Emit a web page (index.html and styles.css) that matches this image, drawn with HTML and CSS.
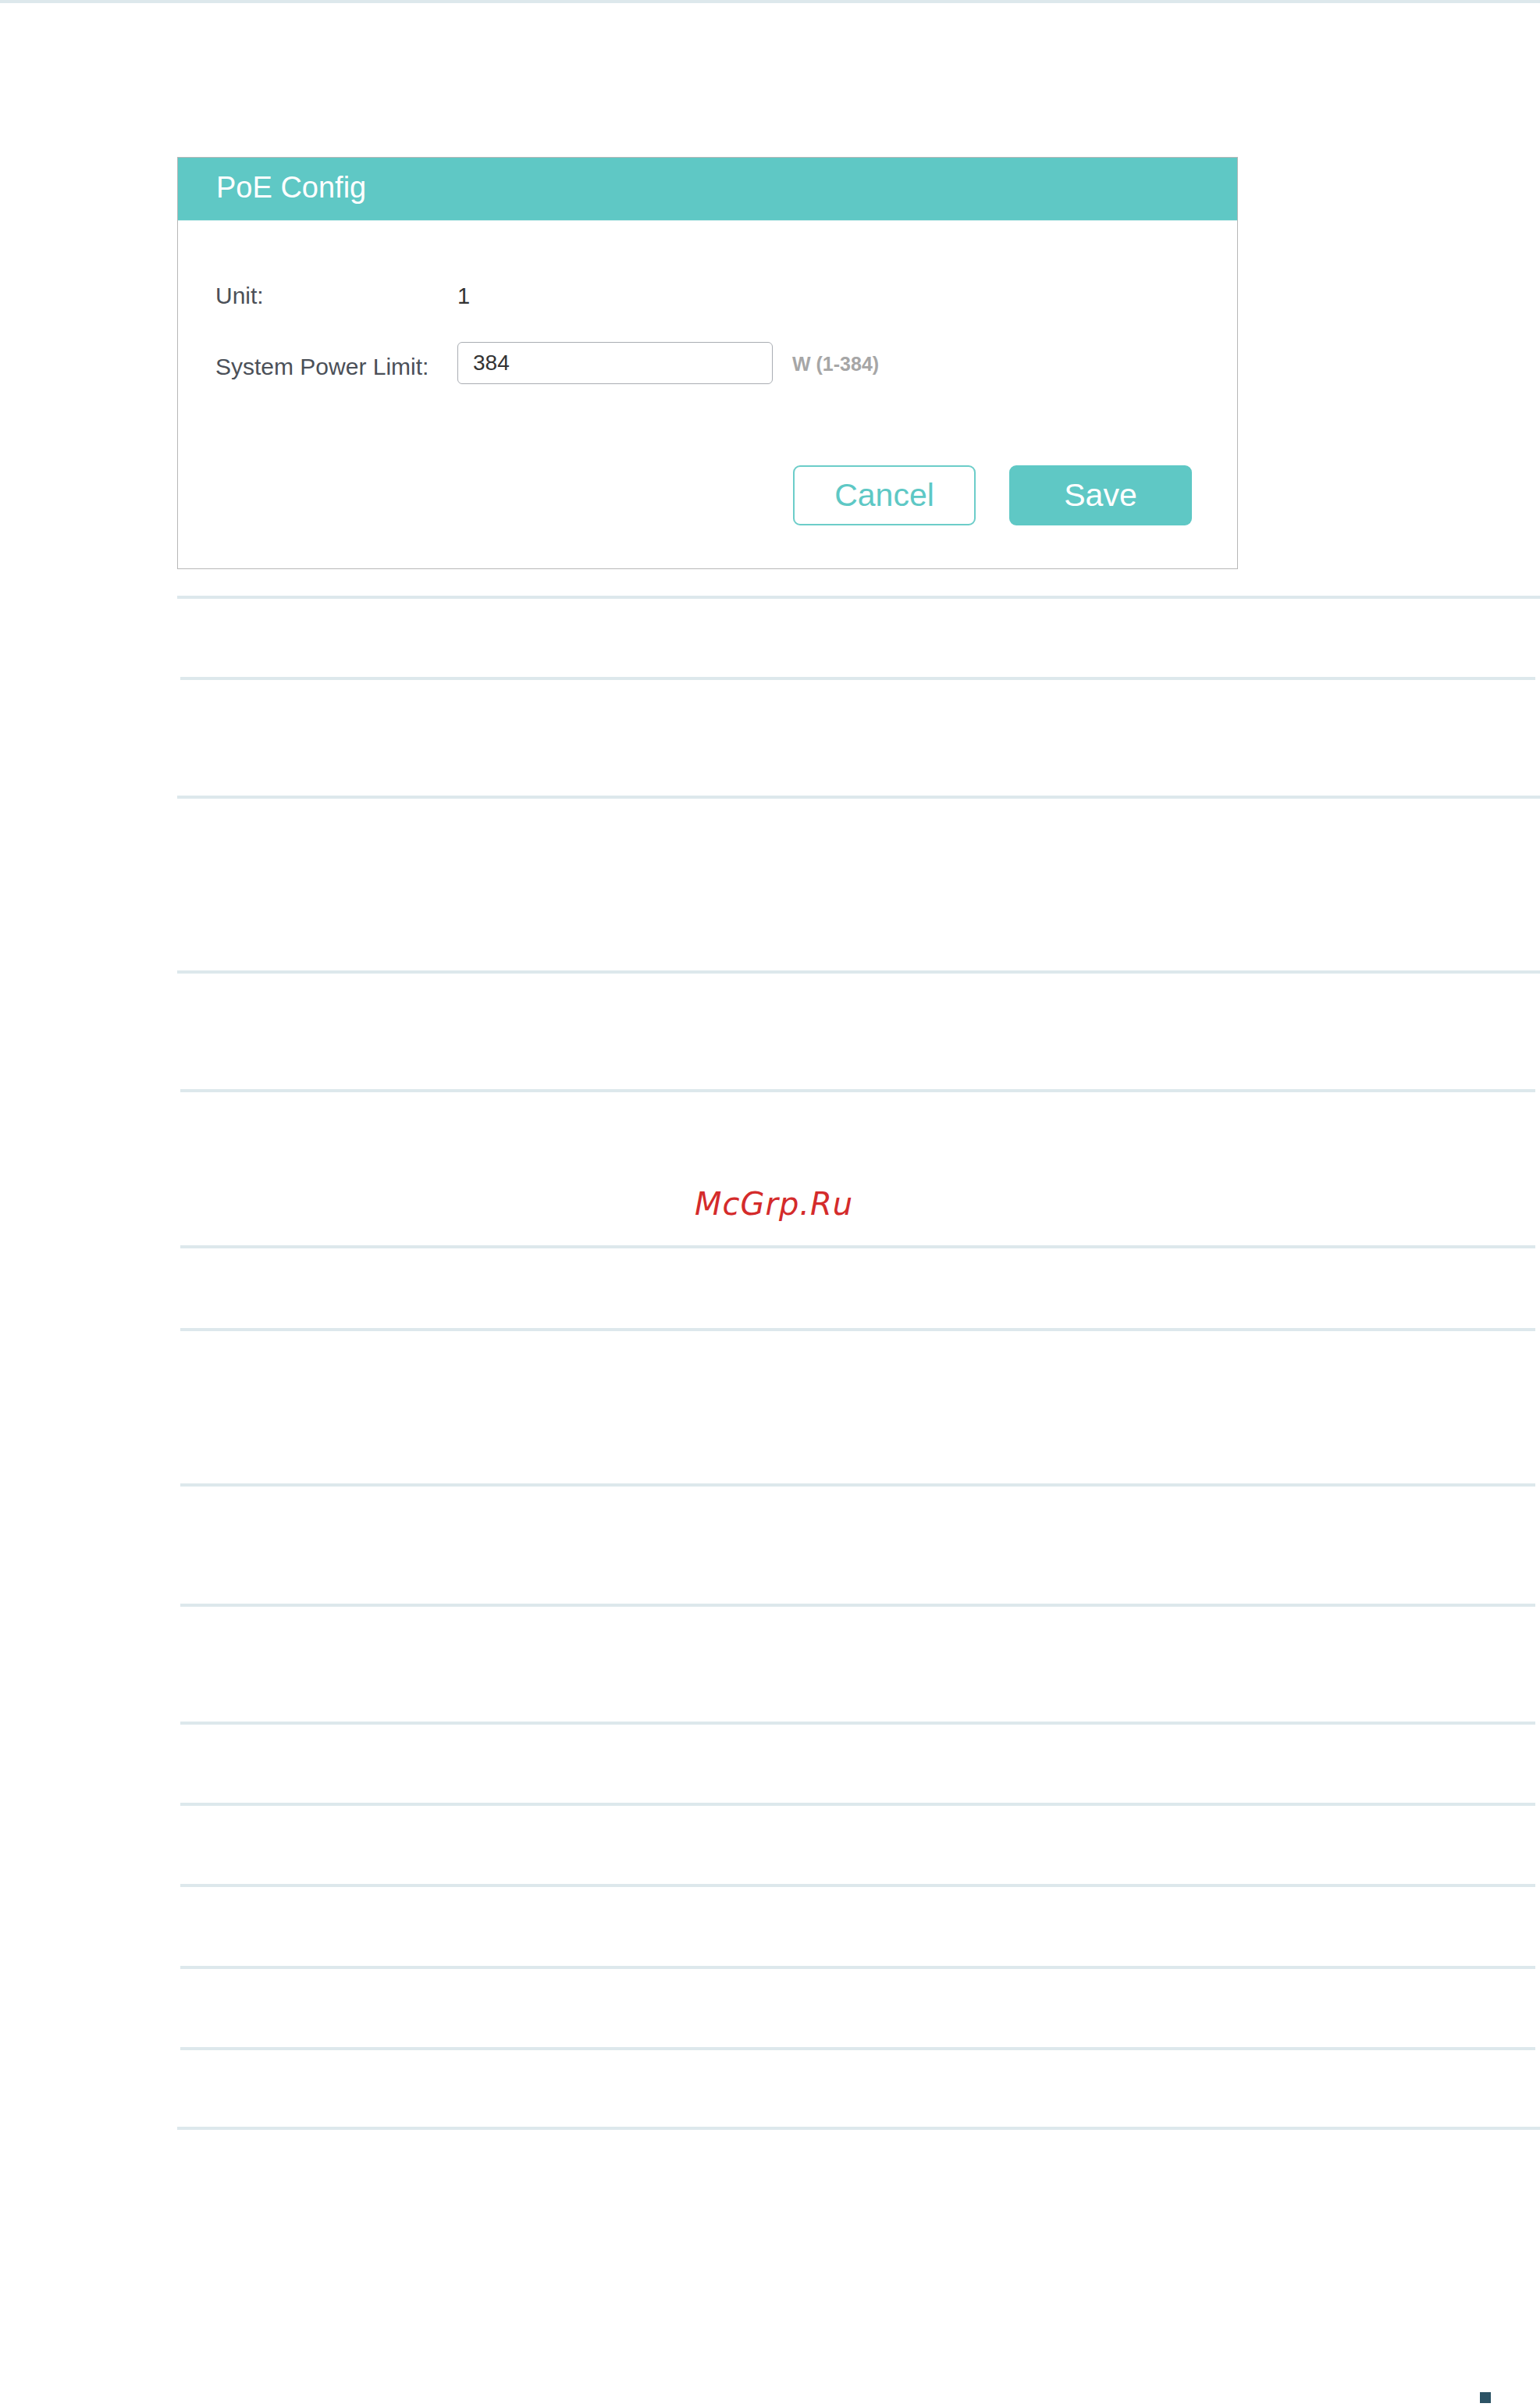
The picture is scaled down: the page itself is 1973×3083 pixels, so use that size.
FILE: index.html
```html
<!DOCTYPE html>
<html lang="en">
<head>
<meta charset="utf-8">
<title>PoE Config</title>
<link rel="stylesheet" href="styles.css">
</head>
<body>
<div class="topbar"></div>
<section class="card">
  <header class="card-head">PoE Config</header>
  <div class="card-body">
    <div class="field unit-row">
      <span class="label">Unit:</span>
      <span class="value">1</span>
    </div>
    <div class="field limit-row">
      <span class="label">System Power Limit:</span>
      <input class="text-input" type="text" value="384">
      <span class="hint">W (1-384)</span>
    </div>
    <div class="actions">
      <button class="btn btn-outline">Cancel</button>
      <button class="btn btn-fill">Save</button>
    </div>
  </div>
</section>
<div class="rules">
  <div class="row h100"></div>
  <div class="row inset h148"></div>
  <div class="row h220"></div>
  <div class="row h148"></div>
  <div class="row inset h196"></div>
  <div class="row inset h102"></div>
  <div class="row inset h195"></div>
  <div class="row inset h150"></div>
  <div class="row inset h147"></div>
  <div class="row inset h100"></div>
  <div class="row inset h100"></div>
  <div class="row inset h101"></div>
  <div class="row inset h100"></div>
  <div class="row inset h98"></div>
  <div class="row"></div>
</div>
<div class="watermark">McGrp.Ru</div>
<div class="page-mark"></div>
</body>
</html>
```
FILE: styles.css
```css
html, body {
  margin: 0;
  padding: 0;
  background: #ffffff;
}
body {
  font-family: "Liberation Sans", Arial, sans-serif;
}
.topbar {
  height: 4px;
  background: #dde8ec;
}
.card {
  margin: 197px 0 0 227px;
  width: 1359px;
  box-sizing: border-box;
  border: 1px solid #b8b8b8;
  background: #ffffff;
}
.card-head {
  box-sizing: border-box;
  height: 81px;
  padding: 0 0 0 49px;
  background: #5fc8c5;
  border-bottom: 1px solid #d3efee;
  color: #ffffff;
  font-size: 38px;
  line-height: 76px;
}
.card-body {
  padding: 76px 58px 55px 48px;
}
.field {
  display: flex;
  align-items: flex-start;
}
.label {
  width: 310px;
  flex: none;
  font-size: 30px;
  line-height: 40px;
  color: #4b5058;
}
.value {
  font-size: 29px;
  line-height: 40px;
  color: #333333;
}
.limit-row {
  margin-top: 39px;
}
.limit-row .label {
  margin-top: 12px;
}
.text-input {
  width: 404px;
  height: 54px;
  flex: none;
  box-sizing: border-box;
  margin: 0;
  padding: 0 19px;
  border: 1px solid #a9adb3;
  border-radius: 6px;
  font-family: "Liberation Sans", Arial, sans-serif;
  font-size: 28px;
  color: #333333;
  background: #ffffff;
  outline: none;
}
.hint {
  margin: 8px 0 0 25px;
  font-size: 25px;
  font-weight: bold;
  line-height: 40px;
  color: #a6a6a6;
}
.actions {
  display: flex;
  justify-content: flex-end;
  gap: 43px;
  margin-top: 104px;
}
.btn {
  width: 234px;
  height: 77px;
  box-sizing: border-box;
  padding: 0;
  border-radius: 9px;
  display: flex;
  align-items: center;
  justify-content: center;
  font-family: "Liberation Sans", Arial, sans-serif;
  font-size: 41px;
  line-height: 1;
  cursor: pointer;
}
.btn-outline {
  background: #ffffff;
  border: 2px solid #6ccdc9;
  color: #5ec8c5;
}
.btn-fill {
  background: #5fc8c5;
  border: 2px solid #5fc8c5;
  color: #ffffff;
}
.rules {
  margin: 34px 0 0 227px;
}
.row {
  border-top: 4px solid #dde8ec;
}
.row.inset {
  margin: 0 6px 0 4px;
}
.h98 { height: 98px; }
.h100 { height: 100px; }
.h101 { height: 101px; }
.h102 { height: 102px; }
.h147 { height: 147px; }
.h148 { height: 148px; }
.h150 { height: 150px; }
.h195 { height: 195px; }
.h196 { height: 196px; }
.h220 { height: 220px; }
.watermark {
  position: absolute;
  left: 890px;
  top: 1522px;
  font-family: "DejaVu Sans", sans-serif;
  font-style: italic;
  font-size: 40px;
  line-height: 40px;
  letter-spacing: 1px;
  color: #d42b2b;
}
.page-mark {
  position: absolute;
  left: 1896px;
  top: 3064px;
  width: 14px;
  height: 14px;
  background: #2c5365;
}
```
